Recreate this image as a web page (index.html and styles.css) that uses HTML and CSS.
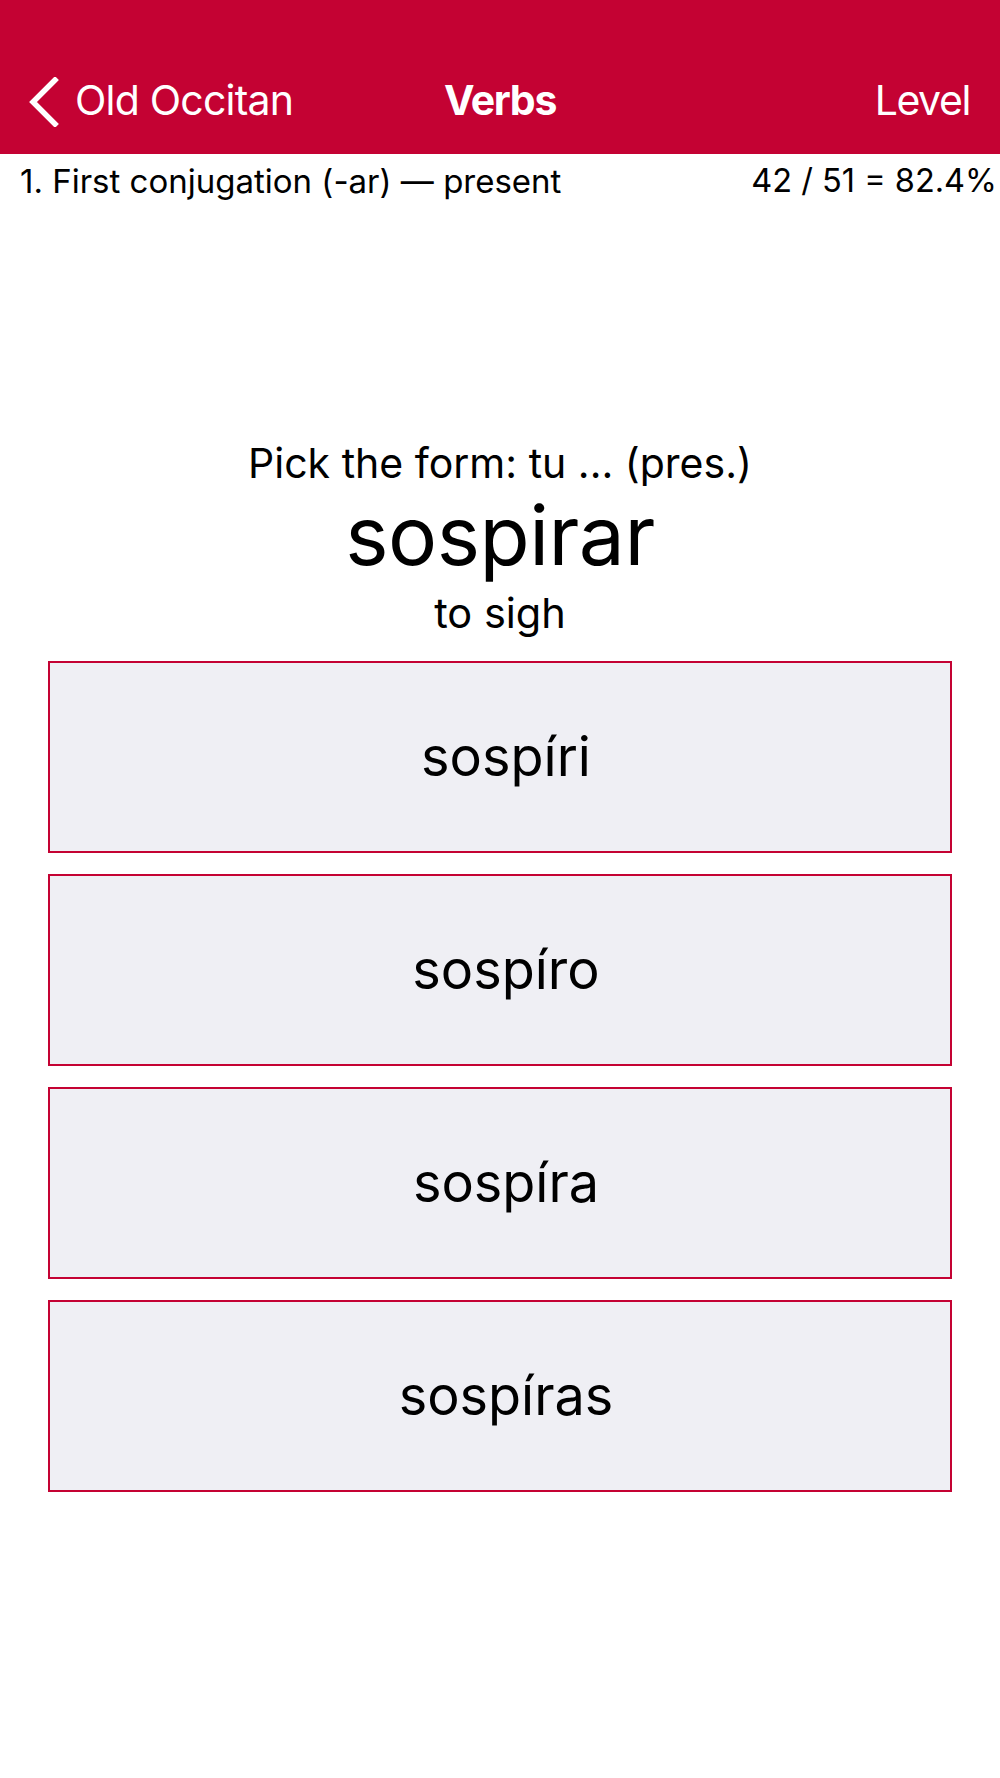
FILE: index.html
```html
<!DOCTYPE html>
<html lang="en">
<head>
<meta charset="utf-8">
<title>Verbs</title>
<link rel="stylesheet" href="styles.css">
</head>
<body>
<header class="navbar">
  <div class="nav-row">
    <a class="nav-back" href="#">
      <svg class="chevron" width="30" height="50" viewBox="0 0 30 50" aria-hidden="true">
        <polyline points="26,3 4,25 26,47" fill="none" stroke="#ffffff" stroke-width="5.5" stroke-linecap="square" stroke-linejoin="miter"/>
      </svg>
      <span class="nav-back-label">Old Occitan</span>
    </a>
    <div class="nav-title">Verbs</div>
    <a class="nav-right" href="#">Level</a>
  </div>
</header>
<div class="status-line">
  <span class="lesson">1. First conjugation (-ar) — present</span>
  <span class="score">42 / 51 = 82.4%</span>
</div>
<main class="quiz">
  <div class="prompt">Pick the form: tu ... (pres.)</div>
  <div class="word">sospirar</div>
  <div class="gloss">to sigh</div>
  <div class="choices">
    <button class="choice">sospíri</button>
    <button class="choice">sospíro</button>
    <button class="choice">sospíra</button>
    <button class="choice">sospíras</button>
  </div>
</main>
</body>
</html>
```

FILE: styles.css
```css
html, body {
  margin: 0;
  padding: 0;
  background: #ffffff;
}
body {
  width: 1000px;
  min-height: 1778px;
  font-family: Inter, "Noto Sans", "Liberation Sans", sans-serif;
  color: #000000;
}
.navbar {
  background: #c40233;
  height: 154px;
  box-sizing: border-box;
  padding-top: 75px;
}
.nav-row {
  position: relative;
  height: 50px;
  display: flex;
  align-items: center;
  justify-content: space-between;
  padding: 0 30px 0 29px;
  font-size: 41px;
  line-height: 50px;
  color: #ffffff;
}
.nav-row a {
  color: #ffffff;
  text-decoration: none;
}
.nav-back {
  display: flex;
  align-items: center;
  gap: 16px;
}
.chevron {
  display: block;
  margin-top: 4px;
}
.nav-back-label {
  letter-spacing: -0.8px;
}
.nav-title {
  position: absolute;
  left: 0;
  right: 0;
  text-align: center;
  font-weight: 700;
  letter-spacing: -1.3px;
  pointer-events: none;
}
.nav-right {
  letter-spacing: -1.4px;
}
.status-line {
  display: flex;
  justify-content: space-between;
  padding: 9px 3px 0 20px;
  font-size: 33px;
  line-height: 36px;
}
.score {
  font-size: 32.5px;
}
.quiz {
  margin-top: 240px;
  text-align: center;
}
.prompt {
  font-size: 41px;
  line-height: 48px;
}
.word {
  margin-top: 1px;
  font-size: 82px;
  line-height: 96px;
  letter-spacing: -0.5px;
}
.gloss {
  margin-top: 5px;
  font-size: 41.5px;
  line-height: 48px;
}
.choices {
  margin: 24px 48px 0 48px;
  display: flex;
  flex-direction: column;
  gap: 21px;
}
.choice {
  display: flex;
  align-items: center;
  justify-content: center;
  height: 192px;
  box-sizing: border-box;
  border: 2px solid #c40233;
  background: #efeff4;
  font-family: Inter, "Noto Sans", "Liberation Sans", sans-serif;
  font-size: 54px;
  color: #000000;
  padding: 0 0 2px 12px;
  margin: 0;
  cursor: pointer;
}
```
